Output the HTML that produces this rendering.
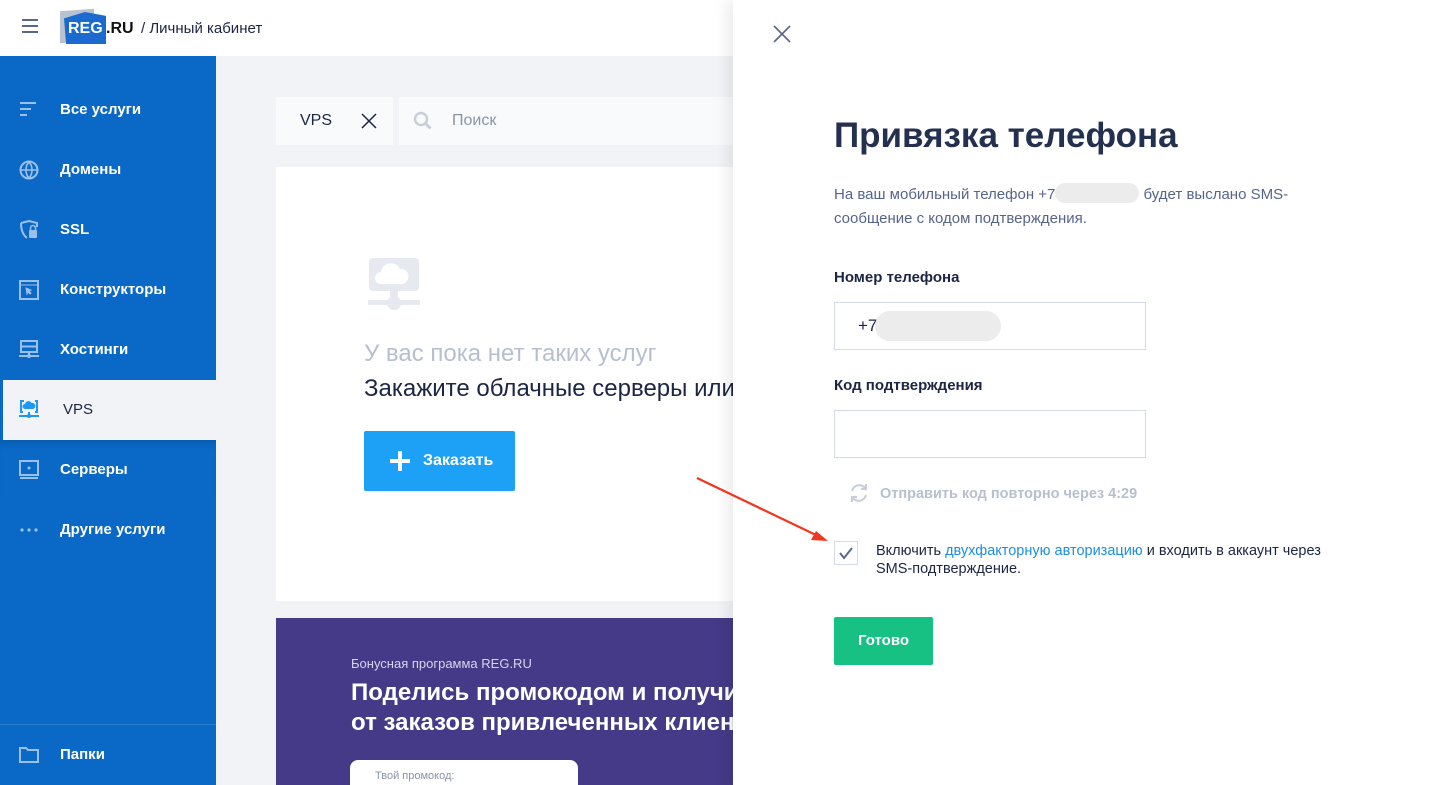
<!DOCTYPE html>
<html><head><meta charset="utf-8"><style>
*{margin:0;padding:0;box-sizing:border-box}
body{width:1440px;height:785px;overflow:hidden;background:#f2f3f7;font-family:"Liberation Sans",sans-serif;position:relative}
.abs{position:absolute}
.hdr{left:0;top:0;width:733px;height:56px;background:#fff}
.side{left:0;top:56px;width:216px;height:729px;background:#0a68c6}
.item{position:absolute;left:0;width:216px;height:60px;color:#fff;font-size:15px;font-weight:bold;line-height:60px;padding-left:60px}
.item svg{position:absolute;left:19px;top:20px}
.panel{left:733px;top:0;width:707px;height:785px;background:#fff;box-shadow:-6px 0 14px rgba(0,0,0,.08)}
.lbl{font-size:15px;font-weight:bold;color:#1c2543}
.inp{width:312px;height:48px;border:1px solid #d3d9e6;background:#fff}
</style></head><body>
<div class="abs hdr">
  <div class="abs" style="left:22px;top:19px;width:16px;height:2px;background:#5a6785;box-shadow:0 6px 0 #5a6785,0 12px 0 #5a6785"></div>
  <div class="abs" style="left:60px;top:10px;width:34px;height:32px;background:#b9c2cf;transform:skewY(-4deg)"></div>
  <div class="abs" style="left:64px;top:12px;width:42px;height:32px;background:#1a6ad0;clip-path:polygon(0 20%,50% 0,100% 12%,100% 100%,5% 100%)"></div>
  <div class="abs" style="left:68px;top:20px;color:#fff;font-weight:bold;font-size:16px">REG</div>
  <div class="abs" style="left:106px;top:20px;color:#111;font-weight:bold;font-size:16px">.RU</div>
  <div class="abs" style="left:141px;top:20px;color:#1c2543;font-size:15px">/ Личный кабинет</div>
</div>
<div class="abs side">
  <div class="item" style="top:24px"><svg width="18" height="18"><path d="M1 3h16M1 9h11M1 15h7" stroke="#9cc0ec" stroke-width="2"/></svg>Все услуги</div>
  <div class="item" style="top:84px"><svg width="20" height="20"><circle cx="10" cy="10" r="8.5" fill="none" stroke="#9cc0ec" stroke-width="2"/><path d="M2 10h16M10 2c-4 4-4 12 0 16M10 2c4 4 4 12 0 16" stroke="#9cc0ec" fill="none" stroke-width="1.6"/></svg>Домены</div>
  <div class="item" style="top:144px"><svg width="20" height="20"><path d="M2 3l8-2 8 2v4M2 3c0 7 2 12 6 15" stroke="#9cc0ec" fill="none" stroke-width="2"/><rect x="10" y="10" width="8" height="8" rx="1" fill="#9cc0ec"/><path d="M11.5 10V8a2.5 2.5 0 015 0v2" stroke="#9cc0ec" fill="none" stroke-width="1.6"/></svg>SSL</div>
  <div class="item" style="top:204px"><svg width="20" height="20"><rect x="1" y="1" width="18" height="18" fill="none" stroke="#9cc0ec" stroke-width="2"/><path d="M1 5h18M7 8l5 2-2 1 2 2-1 1-2-2-1 2z" stroke="#9cc0ec" fill="#9cc0ec" stroke-width="1"/></svg>Конструкторы</div>
  <div class="item" style="top:264px"><svg width="20" height="20"><rect x="2" y="1" width="16" height="11" fill="none" stroke="#9cc0ec" stroke-width="2"/><path d="M2 6.5h16M10 12v3M0 16h20" stroke="#9cc0ec" stroke-width="2"/><circle cx="10" cy="16" r="2" fill="#9cc0ec"/></svg>Хостинги</div>
  <div class="item" style="top:324px;height:60px;background:#f2f3f7;color:#1c2543;font-weight:normal;left:3px"><svg width="20" height="20" style="left:16px"><path d="M4 12H2V1h3M16 1h2v11h-2M10 12v3M0 16h20" stroke="#2196f3" stroke-width="2" fill="none"/><path d="M6 9a2.5 2.5 0 010-5 3.5 3.5 0 016.5-1A2.5 2.5 0 0114 9z" fill="#2196f3"/><circle cx="10" cy="16" r="2" fill="#2196f3"/></svg>VPS</div>
  <div class="item" style="top:384px;box-shadow:inset 0 8px 8px -6px rgba(0,0,0,.15)"><svg width="20" height="20"><rect x="1" y="1" width="18" height="14" fill="none" stroke="#9cc0ec" stroke-width="2"/><path d="M1 18h18" stroke="#9cc0ec" stroke-width="2"/><circle cx="10" cy="8" r="1.5" fill="#9cc0ec"/></svg>Серверы</div>
  <div class="item" style="top:444px"><svg width="20" height="20"><circle cx="3" cy="10" r="1.6" fill="#9cc0ec"/><circle cx="10" cy="10" r="1.6" fill="#9cc0ec"/><circle cx="17" cy="10" r="1.6" fill="#9cc0ec"/></svg>Другие услуги</div>
  <div class="abs" style="left:0;top:668px;width:216px;height:1px;background:#2a7fd2"></div>
  <div class="item" style="top:669px"><svg width="20" height="20"><path d="M1 3h6l2 2h10v12H1z" fill="none" stroke="#9cc0ec" stroke-width="2"/></svg>Папки</div>
</div>
<div class="abs" style="left:276px;top:97px;width:117px;height:48px;background:#f9fafc"></div>
<div class="abs" style="left:300px;top:112px;font-size:16px;color:#1c2543">VPS</div>
<svg class="abs" style="left:360px;top:112px" width="18" height="18"><path d="M2 2l14 14M16 2L2 16" stroke="#1c2543" stroke-width="1.5"/></svg>
<div class="abs" style="left:399px;top:97px;width:334px;height:48px;background:#f9fafc"></div>
<svg class="abs" style="left:413px;top:111px" width="20" height="20"><circle cx="8" cy="8" r="6" stroke="#c9ced8" stroke-width="2.5" fill="none"/><path d="M12.5 12.5l5 5" stroke="#c9ced8" stroke-width="3"/></svg>
<div class="abs" style="left:452px;top:112px;font-size:16px;color:#8a93a8">Поиск</div>
<div class="abs" style="left:276px;top:167px;width:457px;height:434px;background:#fff"></div>
<svg class="abs" style="left:368px;top:257px" width="52" height="56"><rect x="1" y="1" width="50" height="33" rx="4" fill="#e6e9ef"/><path d="M13 27a6 6 0 010-12 10 10 0 0119-3 7.5 7.5 0 012 15z" fill="#fff"/><rect x="22" y="34" width="8" height="10" fill="#e6e9ef"/><rect x="0" y="43" width="52" height="5" fill="#e6e9ef"/><circle cx="26" cy="46" r="7" fill="#e6e9ef"/></svg>
<div class="abs" style="left:364px;top:340px;font-size:24px;color:#b7bfcf;white-space:nowrap">У вас пока нет таких услуг</div>
<div class="abs" style="left:364px;top:375px;font-size:24px;color:#1c2543;white-space:nowrap;width:369px;overflow:hidden">Закажите облачные серверы или</div>
<div class="abs" style="left:364px;top:431px;width:151px;height:60px;background:#1da1f6;border-radius:2px;color:#fff;font-size:16px;font-weight:bold;line-height:60px;padding-left:59px">Заказать</div>
<div class="abs" style="left:390px;top:459px;width:20px;height:4px;background:#fff"></div>
<div class="abs" style="left:398px;top:451px;width:4px;height:20px;background:#fff"></div>
<div class="abs" style="left:276px;top:618px;width:457px;height:167px;background:#443a87;overflow:hidden">
  <div class="abs" style="left:75px;top:38px;font-size:13px;color:#d7d5ee">Бонусная программа REG.RU</div>
  <div class="abs" style="left:75px;top:60px;font-size:24px;font-weight:bold;color:#fff;line-height:30px;white-space:nowrap">Поделись промокодом и получи<br>от заказов привлеченных клиен</div>
  <div class="abs" style="left:74px;top:142px;width:228px;height:40px;background:#fff;border-radius:8px"><div style="position:absolute;left:25px;top:10px;font-size:11px;color:#8a93a8">Твой промокод:</div></div>
</div>
<div class="abs panel">
  <svg class="abs" style="left:40px;top:25px" width="18" height="18"><path d="M1 1l16 16M17 1L1 17" stroke="#5a6785" stroke-width="1.6"/></svg>
  <div class="abs" style="left:101px;top:116px;font-size:35px;font-weight:bold;color:#24304f">Привязка телефона</div>
  <div class="abs" style="left:101px;top:183px;width:470px;font-size:15px;line-height:24px;color:#55658a">На ваш мобильный телефон +7<span style="display:inline-block;width:84px;height:20px;background:#ececec;border-radius:10px;vertical-align:-4px"></span> будет выслано SMS-<br>сообщение с кодом подтверждения.</div>
  <div class="abs lbl" style="left:101px;top:269px">Номер телефона</div>
  <div class="abs inp" style="left:101px;top:302px"><span style="position:absolute;left:23px;top:13px;font-size:17px;color:#1c2543">+7</span><span style="position:absolute;left:40px;top:8px;width:126px;height:30px;background:#ececec;border-radius:15px"></span></div>
  <div class="abs lbl" style="left:101px;top:377px">Код подтверждения</div>
  <div class="abs inp" style="left:101px;top:410px"></div>
  <svg class="abs" style="left:115px;top:482px" width="22" height="22"><path d="M4 9a7.5 7.5 0 0113.5-2.5M18 13a7.5 7.5 0 01-13.5 2.5" stroke="#c9ced8" stroke-width="2.2" fill="none"/><path d="M18 2v5h-5M4 20v-5h5" stroke="#c9ced8" stroke-width="2.2" fill="none"/></svg>
  <div class="abs" style="left:147px;top:486px;font-size:14.5px;font-weight:bold;color:#b7bfcf">Отправить код повторно через 4:29</div>
  <div class="abs" style="left:101px;top:541px;width:24px;height:24px;border:1px solid #d3d9e6"><svg width="22" height="22"><path d="M5 11l4 5 8-10" stroke="#5a6785" stroke-width="2" fill="none"/></svg></div>
  <div class="abs" style="left:143px;top:542px;font-size:14.5px;line-height:18px;color:#1c2543;width:500px">Включить <span style="color:#1a8fe3">двухфакторную авторизацию</span> и входить в аккаунт через<br>SMS-подтверждение.</div>
  <div class="abs" style="left:101px;top:617px;width:99px;height:48px;background:#17c083;border-radius:2px;color:#fff;font-size:15px;font-weight:bold;text-align:center;line-height:48px">Готово</div>
</div>
<svg class="abs" style="left:690px;top:470px" width="150" height="80"><path d="M7 8L128 66" stroke="#f2361c" stroke-width="2.2"/><path d="M138 71l-17-1 5-9z" fill="#f2361c"/></svg>
</body></html>
